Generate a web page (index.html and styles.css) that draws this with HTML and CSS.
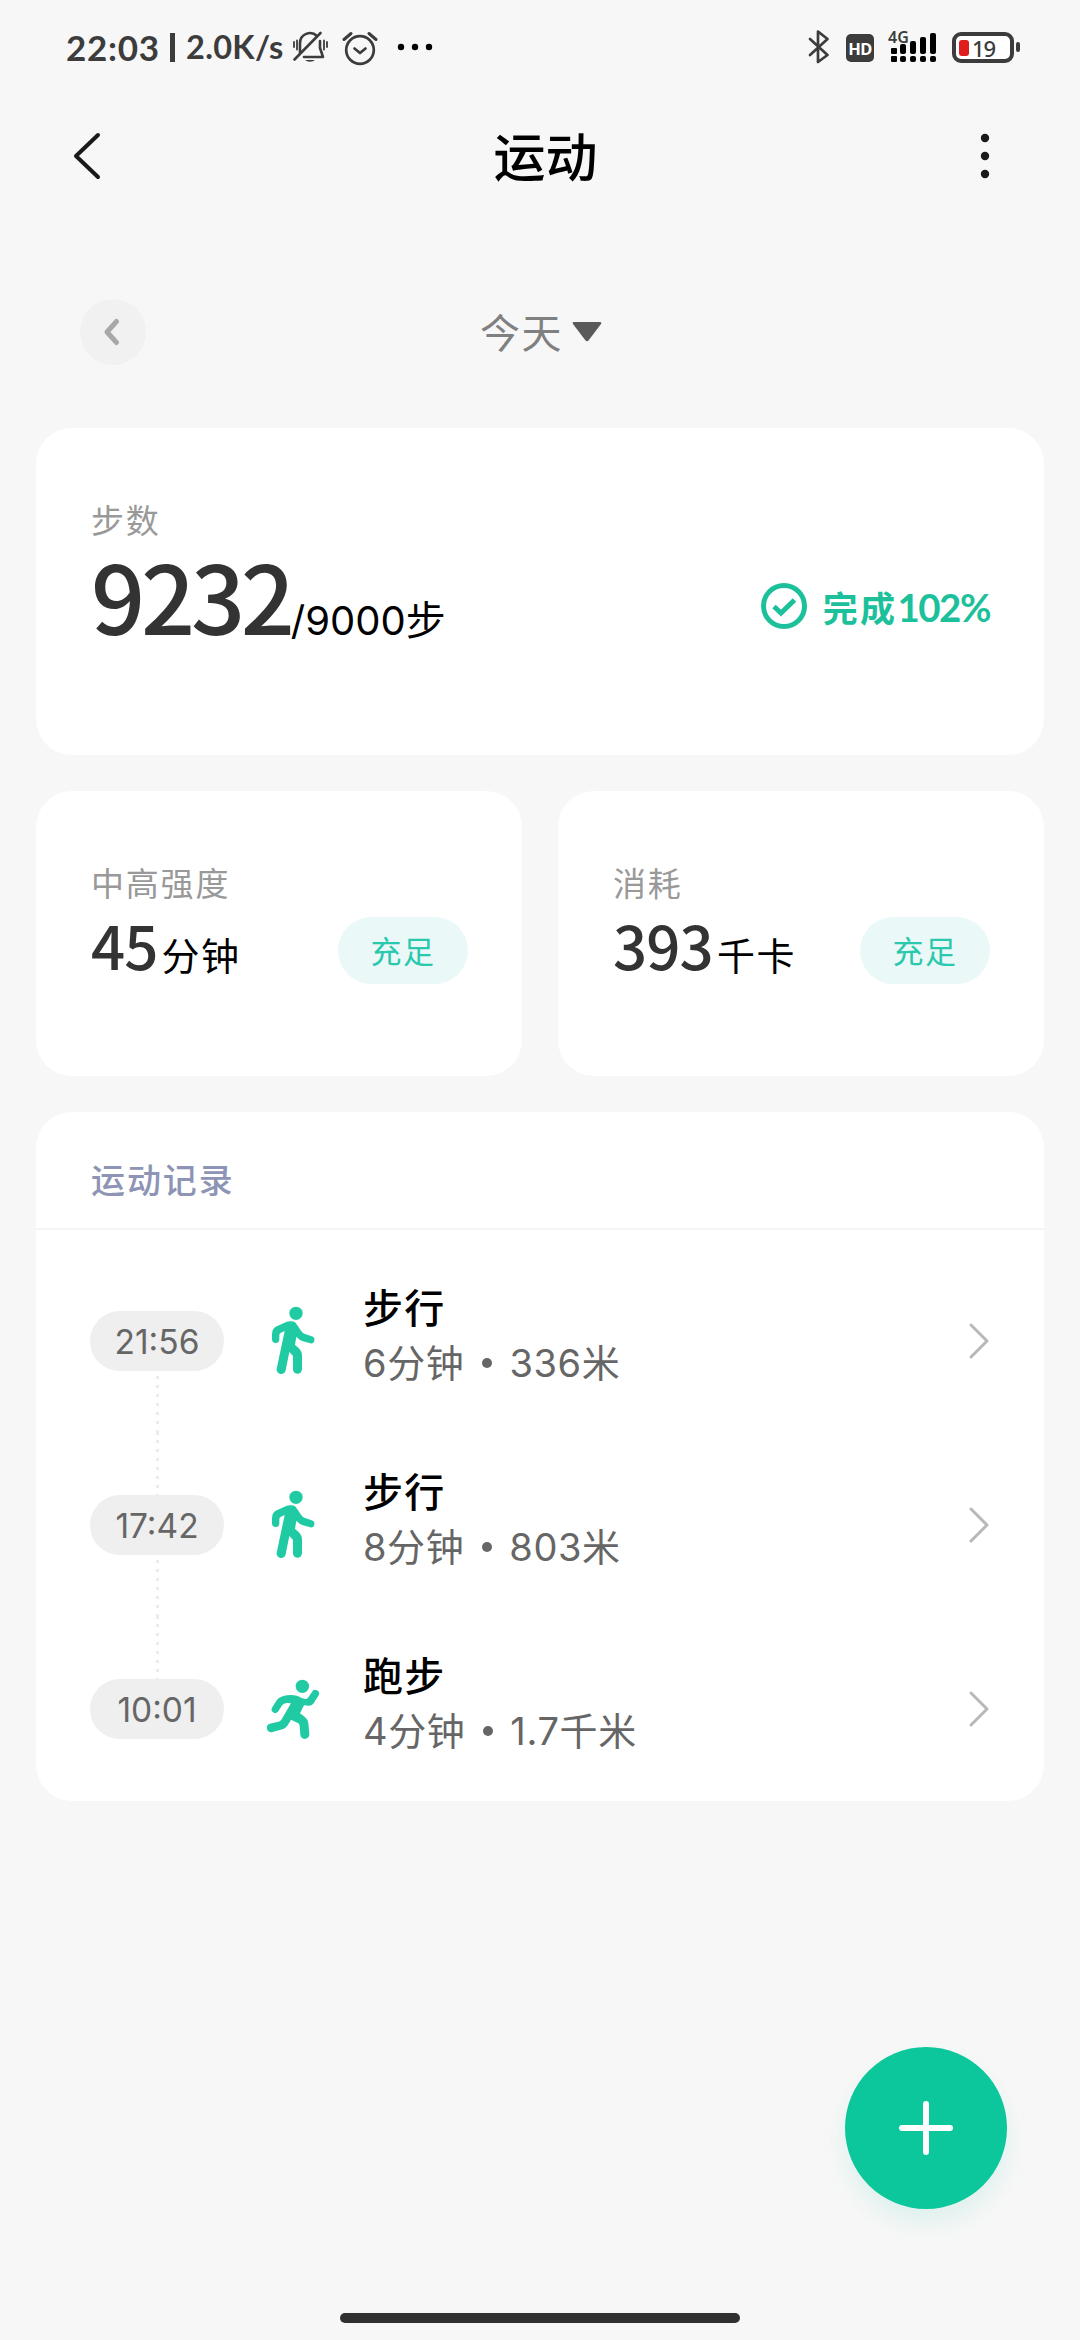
FILE: index.html
```html
<!DOCTYPE html>
<html lang="zh-CN">
<head>
<meta charset="utf-8">
<title>运动</title>
<link rel="stylesheet" href="styles.css">
</head>
<body>
<div class="status">
  <span class="clock">22:03</span><i class="bar"></i><span class="speed">2.0K/s</span>
  <svg class="bell" width="36" height="36" viewBox="0 0 36 36" fill="none" stroke="#3c3c3c" stroke-width="2.6" stroke-linecap="round" stroke-linejoin="round"><path d="M8 24V14a10 10 0 0 1 17-7M28 12v7l3 9H12M2.500 30.500 28.500 4"/><path d="M2 13v5M5 11.500v9M35 13v5M32 11.500v9" stroke-width="1.800"/><path d="M13 31h10a6 4 0 0 1-10 0z" fill="#3c3c3c" stroke="none"/></svg>
  <svg class="alarm" width="36" height="36" viewBox="0 0 36 36" fill="none" stroke="#3c3c3c" stroke-width="2.700" stroke-linecap="round" stroke-linejoin="round"><circle cx="18" cy="20" r="13.800"/><path d="M2 9.500 9 3.500M34 9.500 27 3.500" stroke-width="3"/><path d="m12.500 18.500 5.500 4.500 5.500-4.500"/></svg>
  <svg class="more" width="36" height="8" viewBox="0 0 36 8"><circle cx="4" cy="4" r="3.200"/><circle cx="18" cy="4" r="3.200"/><circle cx="32" cy="4" r="3.200"/></svg>
  <div class="tray">
    <svg width="22" height="36" viewBox="0 0 22 36" fill="none" stroke="#3c3c3c" stroke-width="2.700" stroke-linejoin="round" stroke-linecap="round"><path d="M2 10 19.500 26 10 33V2.500L19.500 10 2 26"/></svg>
    <span class="hd">HD</span>
    <span class="signal"><svg width="48" height="32" viewBox="0 0 48 32"><g><rect x="3" y="17" width="6" height="6" rx="1"/><rect x="12" y="13" width="6" height="10" rx="2"/><rect x="22" y="10" width="6" height="13" rx="2"/><rect x="32" y="6" width="6" height="17" rx="2"/><rect x="42" y="2" width="6" height="21" rx="2"/><rect x="3" y="25" width="6" height="6" rx="1"/><rect x="12" y="25" width="6" height="6" rx="2"/><rect x="22" y="25" width="6" height="6" rx="2"/><rect x="32" y="25" width="6" height="6" rx="2"/><rect x="42" y="25" width="6" height="6" rx="2"/></g></svg><b class="net">4G</b></span>
    <span class="battery"><i class="level"></i>19</span><i class="tip"></i>
  </div>
</div>

<header class="header">
  <svg width="34" height="50" viewBox="0 0 34 50" fill="none" stroke="#1a1a1a" stroke-width="4" stroke-linecap="round" stroke-linejoin="round"><path d="M28 4 6 25l22 21"/></svg>
  <h1>运动</h1>
  <svg width="10" height="46" viewBox="0 0 10 46" fill="#1a1a1a"><circle cx="5" cy="5" r="4.200"/><circle cx="5" cy="23" r="4.200"/><circle cx="5" cy="41" r="4.200"/></svg>
</header>

<nav class="day">
  <span class="prev"><svg width="22" height="30" viewBox="0 0 22 30" fill="none" stroke="#a8a8a8" stroke-width="5" stroke-linecap="round" stroke-linejoin="round"><path d="M14.500 4.500 5 15l9.500 10.500"/></svg></span>
  <span class="today">今天</span>
  <svg class="drop" width="30" height="20" viewBox="0 0 30 20" fill="#5a5a5a"><path d="M2 0h26q2 0 1 2L16.500 18.500q-1.500 1.500-3 0L1 2Q0 0 2 0z"/></svg>
</nav>

<main>
  <section class="card steps">
    <div>
      <div class="label">步数</div>
      <div class="value big"><b>9232</b><span class="unit goal">/9000步</span></div>
    </div>
    <div class="done">
      <svg width="46" height="46" viewBox="0 0 46 46" fill="none" stroke="#1cc09a"><circle cx="23" cy="23" r="20.500" stroke-width="5"/><path d="m13 23.500 7 6.500 13.500-13" stroke-width="5"/></svg>
      <span>完成<em>102%</em></span>
    </div>
  </section>

  <div class="pair">
    <section class="card mini">
      <div>
        <div class="label">中高强度</div>
        <div class="value"><b>45</b><span class="unit">分钟</span></div>
      </div>
      <span class="badge">充足</span>
    </section>
    <section class="card mini">
      <div>
        <div class="label">消耗</div>
        <div class="value"><b>393</b><span class="unit">千卡</span></div>
      </div>
      <span class="badge">充足</span>
    </section>
  </div>

  <section class="card records">
    <h2>运动记录</h2>
    <ul>
      <li>
        <div class="time"><i></i><span>21:56</span><i class="dots below"></i></div>
        <svg class="sport" viewBox="57 54 210 258"><use href="#walk"/></svg>
        <div class="info"><h3>步行</h3><p>6分钟<s></s>336米</p></div>
        <svg class="go" viewBox="0 0 22 38"><path d="m3 3 16 16L3 35"/></svg>
      </li>
      <li>
        <div class="time"><i class="dots"></i><span>17:42</span><i class="dots below"></i></div>
        <svg class="sport" viewBox="57 54 210 258"><use href="#walk"/></svg>
        <div class="info"><h3>步行</h3><p>8分钟<s></s>803米</p></div>
        <svg class="go" viewBox="0 0 22 38"><path d="m3 3 16 16L3 35"/></svg>
      </li>
      <li>
        <div class="time"><i class="dots"></i><span>10:01</span><i></i></div>
        <svg class="sport" viewBox="57 18 210 258"><use href="#run"/></svg>
        <div class="info"><h3>跑步</h3><p>4分钟<s></s>1.7千米</p></div>
        <svg class="go" viewBox="0 0 22 38"><path d="m3 3 16 16L3 35"/></svg>
      </li>
    </ul>
  </section>
</main>

<button class="add"><svg width="56" height="56" viewBox="0 0 56 56" stroke="#fff" stroke-width="6" stroke-linecap="round"><path d="M28 4v48M4 28h48"/></svg></button>
<div class="home"></div>

<svg class="defs" width="0" height="0">
  <defs>
    <g id="walk">
      <circle cx="168" cy="100" r="20"/>
      <path d="M150 124Q164 122 171 134L183 152Q188 160 197 163L215 169A10.500 10.500 0 0 1 210 190L187 183Q178 180 169 170L165 194L178 206Q186 214 186 226V268A13.500 13.500 0 0 1 159 268V231Q159 227 156 224L148 216L137 271A13.500 13.500 0 0 1 110 266L134 153L123 158Q118 160 118 166V178A11 11 0 0 1 96 178V162Q96 146 110 139L137 127Q143 124 150 124Z"/>
    </g>
    <g id="run">
      <circle cx="187" cy="79" r="20"/>
      <path d="M128 109Q150 102 170 107Q177 109 183 113L195 117Q201 118 204 113L216 96A11 11 0 0 1 236 106L221 130Q216 138 207 137L192 136L180 160L194 170Q204 178 205 190L208 221A13.500 13.500 0 0 1 181 225L179 198Q179 193 175 190L153 179Q148 188 142 197Q136 205 128 208L95 217A13.500 13.500 0 0 1 89 191L115 185Q121 184 124 179L153 130Q140 127 132 131Q128 133 125 138L115 154A11 11 0 0 1 96 143L110 121Q116 112 128 109Z"/>
    </g>
  </defs>
</svg>
</body>
</html>
```
FILE: styles.css
```css
* { box-sizing: border-box; margin: 0; padding: 0; }
body {
  position: relative;
  width: 1080px;
  height: 2340px;
  overflow: hidden;
  background: #f7f7f7;
  color: #000;
  font-family: Inter, "Noto Sans CJK SC", sans-serif;
}
i, em, s { font-style: normal; text-decoration: none; }
svg { display: block; flex: none; }
.defs { position: absolute; }

.status { display: flex; align-items: center; height: 94px; padding: 0 60px 0 66px; color: #3c3c3c; white-space: nowrap; }
.clock { width: 104px; font: 700 35px/40px Lato, sans-serif; letter-spacing: .7px; }
.bar { width: 5px; height: 29px; background: #3c3c3c; }
.speed { width: 105px; margin-left: 11px; font: 700 32.500px/40px Lato, sans-serif; letter-spacing: .3px; }
.bell { margin-left: 1px; }
.alarm { margin: 1px 0 0 14px; }
.more { margin-left: 19px; }
.tray { display: flex; align-items: center; margin-left: auto; }
.hd { width: 28px; height: 28px; margin: 1px 0 0 16px; border-radius: 5px; background: #3c3c3c; color: #fff; font: 700 16.500px/29px "Noto Sans", sans-serif; letter-spacing: -.5px; text-align: center; }
.signal { position: relative; margin-left: 14px; }
.net { position: absolute; left: 0; top: -2px; font: 600 16px/16px "Noto Sans", sans-serif; }
.battery { display: flex; align-items: center; width: 62px; height: 31px; margin: 1px 0 0 16px; padding-left: 3px; border: 4px solid #3c3c3c; border-radius: 9px; font: 500 22px/24px "Noto Sans", sans-serif; letter-spacing: -1px; background: #fff; }
.level { width: 10px; height: 16px; margin-right: 3px; border-radius: 3px; background: #e01c1c; }
.tip { width: 4px; height: 10px; margin-left: 2px; border-radius: 2px; background: #3c3c3c; }

.header { display: flex; align-items: center; justify-content: space-between; height: 124px; padding: 0 90px 0 70px; }
.header h1 { font-size: 52px; line-height: 60px; font-weight: 500; margin-left: 7px; padding-top: 5px; }
.day { display: flex; align-items: center; height: 210px; padding: 18px 80px 0; }
.prev { display: flex; align-items: center; justify-content: center; width: 66px; height: 66px; border-radius: 50%; background: #f1f1f1; }
.today { margin-left: 334px; padding-top: 4px; font-size: 40px; line-height: 56px; letter-spacing: 1.4px; color: #808080; }
.drop { margin-left: 9px; }

main { display: flex; flex-direction: column; gap: 36px; padding: 0 36px; }
.card { border-radius: 36px; background: #fff; }
.steps, .mini { display: flex; justify-content: space-between; padding: 72px 54px 0 55px; }
.steps { height: 327px; }
.pair { display: grid; grid-template-columns: 1fr 1fr; gap: 36px; }
.mini { height: 285px; }
.label { font-size: 33px; line-height: 43px; letter-spacing: 1.800px; color: #999; }
.value { display: flex; align-items: baseline; line-height: 76px; white-space: nowrap; }
.value b { font-family: "Noto Sans CJK SC", sans-serif; font-size: 60px; font-weight: 500; color: #333; letter-spacing: -.900px; }
.value.big { line-height: 101px; }
.value.big b { font-size: 95px; letter-spacing: -4.200px; }
.unit { margin-left: 4px; font-size: 38px; letter-spacing: 1.500px; line-height: 40px; }
.goal { margin-left: 0; font-size: 40px; letter-spacing: 0; }
.done { display: flex; align-items: center; gap: 16px; height: 46px; margin-top: 83px; color: #1cc09a; font-size: 35px; font-weight: 700; letter-spacing: 2.400px; }
.done em { font-family: Lato, sans-serif; font-weight: 700; font-size: 38.500px; letter-spacing: -1.500px; }
.badge { width: 130px; height: 67px; margin-top: 54px; border-radius: 34px; background: #eaf9f8; color: #2bc8ae; font-size: 31px; line-height: 69px; letter-spacing: 1.6px; text-align: center; }

.records { height: 689px; }
.records h2 { height: 118px; padding: 21px 55px 0; border-bottom: 2px solid #f5f5f5; color: #8e94b5; font-size: 34px; line-height: 96px; font-weight: 500; letter-spacing: 1.900px; }
.records ul { padding: 19px 54px 0; list-style: none; }
.records li { display: flex; align-items: center; height: 184px; }
.time { width: 134px; }
.time span { display: block; height: 60px; border-radius: 30px; background: #efefef; color: #666; font-size: 33.500px; line-height: 62px; text-align: center; }
.time i { display: block; width: 3px; height: 62px; margin: 0 auto; }
.dots { background: repeating-linear-gradient(#ececec 0 3px, transparent 3px 9px) 0 7px; }
.below { background-position: 0 5px; background-repeat: no-repeat; }
.sport { width: 70px; height: 86px; margin-left: 35px; fill: #20cba4; }
.info { margin-left: 34px; padding-bottom: 11px; line-height: 54px; }
.info h3 { font-size: 40px; font-weight: 500; letter-spacing: 1.300px; }
.info p { display: flex; align-items: center; font-size: 38px; letter-spacing: .6px; color: #666; }
.info s { width: 10px; height: 10px; margin: 0 17px 0 18px; border-radius: 50%; background: #666; }
.go { width: 22px; height: 38px; margin-left: auto; fill: none; stroke: #b8b8b8; stroke-width: 3; stroke-linecap: round; stroke-linejoin: round; }

.add { position: absolute; left: 845px; top: 2047px; display: flex; align-items: center; justify-content: center; width: 162px; height: 162px; border: 0; border-radius: 50%; background: #0bc79b; box-shadow: 0 14px 24px rgba(11, 199, 155, .1); }
.home { position: absolute; left: 340px; bottom: 17px; width: 400px; height: 10px; border-radius: 5px; background: #303030; }
```
